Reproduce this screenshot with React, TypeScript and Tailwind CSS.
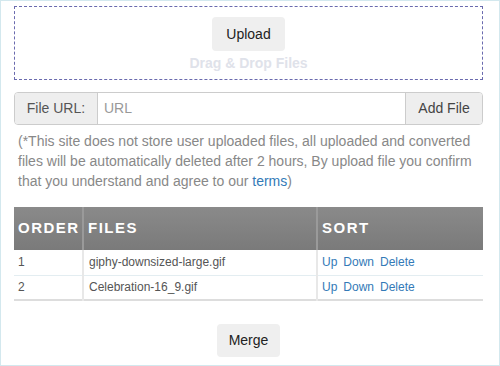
import React from 'react';

const files = [
  { order: 1, name: 'giphy-downsized-large.gif' },
  { order: 2, name: 'Celebration-16_9.gif' },
];

const App = () => {
  return (
    <div className="w-[500px] h-[366px] border border-[#d3e8ee] bg-white pl-[13px] pr-[16px] pt-[5px] font-['Liberation_Sans',Arial,sans-serif] text-[14px] text-[#333]">
      {/* Drop zone */}
      <div className="h-[74px] border border-dashed border-[#6a6aae] flex flex-col items-center pt-[10px]">
        <button className="h-[34px] px-[14px] rounded-[4px] bg-[#efefef] text-[14px] text-[#222]">
          Upload
        </button>
        <div className="mt-[2px] text-[14px] font-bold leading-[20px] text-[#dfe2ea]">
          Drag &amp; Drop Files
        </div>
      </div>

      {/* URL input */}
      <div className="mt-[12px] flex h-[33px] rounded-[4px] border border-[#ccc] overflow-hidden">
        <div className="w-[83px] flex items-center justify-center bg-[#eee] border-r border-[#ccc] text-[#555]">
          File URL:
        </div>
        <input
          className="flex-1 min-w-0 px-[6px] text-[14px] outline-none placeholder:text-[#999]"
          placeholder="URL"
        />
        <div className="w-[77px] flex items-center justify-center bg-[#eee] border-l border-[#ccc] text-[#444]">
          Add File
        </div>
      </div>

      <p className="mt-[6px] px-[4px] leading-[20px] text-[#888]">
        (*This site does not store user uploaded files, all uploaded and converted files will be
        automatically deleted after 2 hours, By upload file you confirm that you understand and
        agree to our <a className="text-[#337ab7]">terms</a>)
      </p>

      {/* Files table */}
      <table className="mt-[16px] w-full border-collapse text-left">
        <thead>
          <tr className="h-[43px] bg-gradient-to-b from-[#8a8a8a] to-[#7a7a7a] text-white text-[15px] font-bold tracking-[1.5px]">
            <th className="w-[69px] pl-[4px] border-r-2 border-[#9a9a9a]">ORDER</th>
            <th className="w-[234px] pl-[4px] border-r-2 border-[#9a9a9a]">FILES</th>
            <th className="pl-[4px]">SORT</th>
          </tr>
        </thead>
        <tbody className="text-[12px] text-[#555]">
          {files.map((f, i) => (
            <tr
              key={f.order}
              className={`h-[25px] ${i === files.length - 1 ? 'border-b-2 border-[#ddd]' : 'border-b border-[#e3edf1]'}`}
            >
              <td className="pl-[4px] border-r-2 border-[#e8e8e8]">{f.order}</td>
              <td className="pl-[5px] border-r-2 border-[#e8e8e8]">{f.name}</td>
              <td className="pl-[4px] text-[#337ab7]">
                <a className="mr-[6px]">Up</a>
                <a className="mr-[6px]">Down</a>
                <a>Delete</a>
              </td>
            </tr>
          ))}
        </tbody>
      </table>

      <div className="mt-[23px] flex justify-center">
        <button className="h-[33px] px-[12px] rounded-[4px] bg-[#efefef] text-[14px] text-[#222]">
          Merge
        </button>
      </div>
    </div>
  );
};

export default App;
